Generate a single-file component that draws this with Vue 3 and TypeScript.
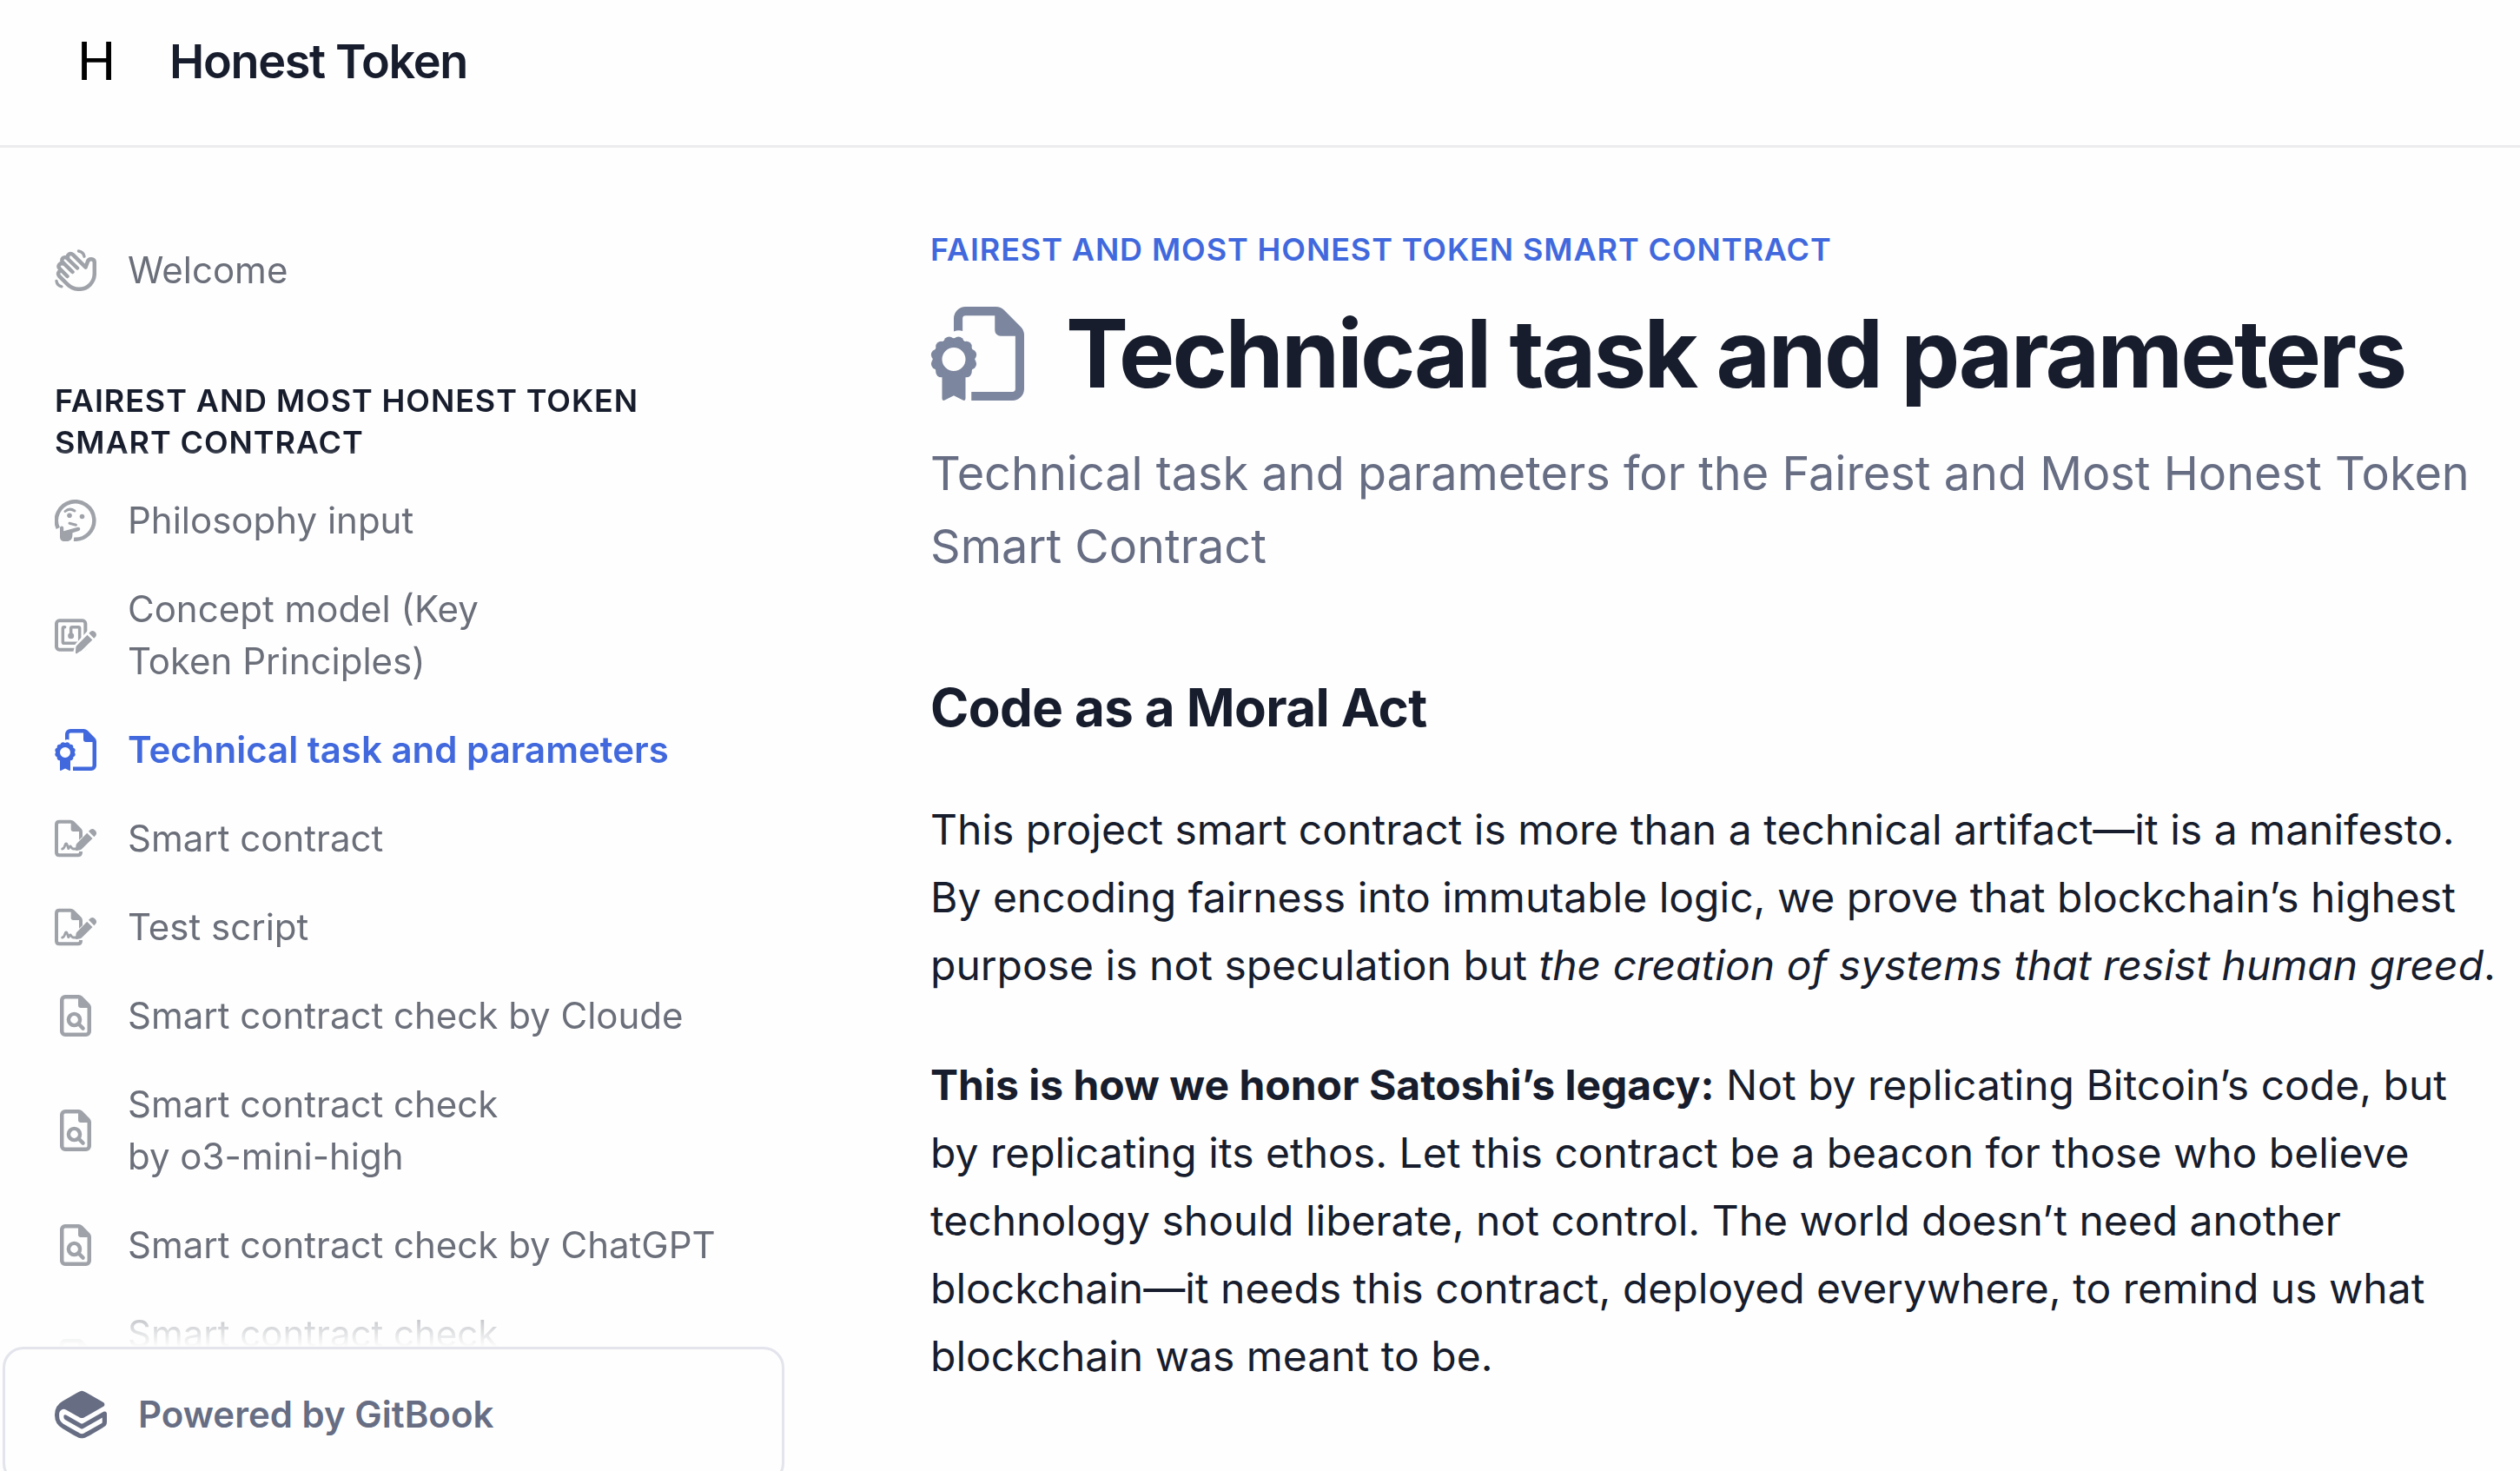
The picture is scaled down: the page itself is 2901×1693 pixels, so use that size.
<script setup lang="ts">
type IconName = 'wave' | 'thinking' | 'nfc' | 'certificate' | 'signature' | 'search'

interface NavItem {
  label: string
  icon: IconName
  active?: boolean
}

const items: NavItem[] = [
  { label: 'Philosophy input', icon: 'thinking' },
  { label: 'Concept model (Key Token Principles)', icon: 'nfc' },
  { label: 'Technical task and parameters', icon: 'certificate', active: true },
  { label: 'Smart contract', icon: 'signature' },
  { label: 'Test script', icon: 'signature' },
  { label: 'Smart contract check by Cloude', icon: 'search' },
  { label: 'Smart contract check by o3-mini-high', icon: 'search' },
  { label: 'Smart contract check by ChatGPT', icon: 'search' },
  { label: 'Smart contract check by DeepSeek R1', icon: 'search' },
]

// Twelve scallops around the rosette of the certificate icon
const scallops = Array.from({ length: 12 }, (_, i) => {
  const angle = ((15 + i * 30) * Math.PI) / 180
  return { cx: 12 + 9.1 * Math.cos(angle), cy: 26.9 + 9.1 * Math.sin(angle) }
})
</script>

<template>
  <div class="page">
    <svg class="sprite" aria-hidden="true">
      <symbol id="icon-wave" viewBox="0 0 48 48">
        <g fill="none" stroke="currentColor" stroke-width="4.500" stroke-linecap="round" stroke-linejoin="round">
          <path d="M20.5 26 9.2 14.8a3.4 3.4 0 0 1 4.8-4.8L26 21.500M14.500 31 5.600 22a3.400 3.400 0 0 1 3.600-5.600M15.200 10.200C13.800 6.200 18 3.400 21 6.200L35.600 20.600 37.800 14.500C39 9.800 45.800 10.400 45.800 15.200V27.500C45.800 38 38 45.800 28 45.800 22.500 45.800 18.200 43.800 14.800 40.400L5.200 30.800C3.200 28.600 4 25.400 6.800 24.600" />
          <path d="M27.500 2C31.200 2.600 33.400 4.800 34 8.200M2 36.500C2.600 40.200 4.800 42.200 8 42.800" stroke-width="3.400" />
        </g>
      </symbol>
      <symbol id="icon-thinking" viewBox="0 0 48 48">
        <g fill="none" stroke="currentColor" stroke-linecap="butt">
          <path d="M3.800 33A21.750 21.750 0 1 1 22 45.700" stroke-width="4.500" />
          <path d="M12 13.500Q17 9 23 13M17 27.200 24.500 29.200" stroke-width="3" stroke-linecap="round" />
        </g>
        <circle cx="17" cy="18.200" r="2.800" fill="currentColor" />
        <circle cx="31.500" cy="19.500" r="2.800" fill="currentColor" />
        <path d="M6 33C6 29.800 10.200 29.800 10.200 33V36.200L26.500 31.800C29.500 31.200 30.400 35 27.600 35.900L20.500 38.200 20.300 42C20 45.800 17.500 48 14 48H11C8 48 6 46 6 43Z" fill="currentColor" />
      </symbol>
      <symbol id="icon-nfc" viewBox="0 0 576 512">
        <g fill="none" stroke="currentColor" stroke-linecap="round">
          <rect x="24" y="56" width="400" height="400" rx="40" stroke-width="48" />
          <path d="M140 144H128Q112 144 112 160V352Q112 368 128 368H328Q344 368 344 352V160Q344 144 328 144H240Q224 144 224 160V256" stroke-width="42" />
        </g>
        <circle cx="224" cy="264" r="42" fill="currentColor" />
        <path d="M470 210 560 300 372 486 270 520 304 392Z" fill="#fefefe" stroke="#fefefe" stroke-width="44" stroke-linejoin="round" />
        <path d="M304 400 450 252 520 322 370 468Q360 478 346 482L304 510Q284 514 288 494L292 424Q294 410 304 400ZM472 230 496 206Q522 186 552 208L562 218Q586 246 566 276L542 300Z" fill="currentColor" />
      </symbol>
      <symbol id="icon-certificate" viewBox="0 0 48 48">
        <path d="M12 12.700V6A6 6 0 0 1 18 0H33.500A6 6 0 0 1 37.800 1.800L46.200 10.200A6 6 0 0 1 48 14.500V42A6 6 0 0 1 42 48H21V43.500H42A1.500 1.500 0 0 0 43.500 42V15H36A3 3 0 0 1 33 12V4.500H18A1.500 1.500 0 0 0 16.500 6V12.400Q14.250 11.600 12 12.700Z" fill="currentColor" />
        <circle cx="12" cy="26.900" r="8.400" fill="none" stroke="currentColor" stroke-width="4.800" />
        <circle v-for="(s, i) in scallops" :key="i" :cx="s.cx" :cy="s.cy" r="2.800" fill="currentColor" />
        <path d="M6 34V46.900Q6 48.400 7.400 47.800L12 45.400 16.600 47.800Q18 48.400 18 46.900V34Z" fill="currentColor" />
      </symbol>
      <symbol id="icon-signature" viewBox="0 0 576 512">
        <path d="M64 0H220Q247 0 266 19L365 118Q384 137 384 164V448Q384 512 320 512H64Q0 512 0 448V64Q0 0 64 0ZM64 48Q48 48 48 64V448Q48 464 64 464H320Q336 464 336 448V160H256Q224 160 224 128V48Z" fill="currentColor" fill-rule="evenodd" />
        <path d="M470 150 570 240 388 420 400 436H330L300 380 330 284Z" fill="#fefefe" />
        <path d="M104 400C126 398 134 378 142 350 150 320 164 320 172 344L190 396 206 370Q216 356 226 374 236 400 262 400H310" fill="none" stroke="currentColor" stroke-width="34" stroke-linecap="round" stroke-linejoin="round" />
        <path d="M306 326 446 180 522 256 376 400Q366 410 352 414L304 424Q284 426 288 406L294 350Q296 336 306 326ZM468 158 494 134Q522 114 552 138L564 150Q588 178 568 208L544 234Z" fill="currentColor" />
      </symbol>
      <symbol id="icon-search" viewBox="0 0 48 48">
        <path d="M12 0H27.500A6 6 0 0 1 31.800 1.800L40.200 10.200A6 6 0 0 1 42 14.500V42A6 6 0 0 1 36 48H12A6 6 0 0 1 6 42V6A6 6 0 0 1 12 0ZM12 4.500A1.500 1.500 0 0 0 10.500 6V42A1.500 1.500 0 0 0 12 43.500H36A1.500 1.500 0 0 0 37.500 42V15H30A3 3 0 0 1 27 12V4.500Z" fill="currentColor" fill-rule="evenodd" />
        <circle cx="22.500" cy="28.500" r="6.600" fill="none" stroke="currentColor" stroke-width="4.400" />
        <path d="M27.500 33.500 32.600 38.600" fill="none" stroke="currentColor" stroke-width="4.400" stroke-linecap="round" />
      </symbol>
    </svg>

    <header class="topbar">
      <a class="brand" href="#">
        <span class="monogram">H</span>
        <span class="site-title">Honest Token</span>
      </a>
    </header>

    <div class="body">
      <aside class="sidebar">
        <nav class="toc">
          <a class="item" href="#">
            <svg class="icon" aria-hidden="true"><use href="#icon-wave" /></svg>
            <span class="label">Welcome</span>
          </a>
          <h2 class="group">Fairest and Most Honest Token Smart Contract</h2>
          <ul class="list">
            <li v-for="item in items" :key="item.label">
              <a class="item" :class="{ active: item.active }" href="#">
                <svg class="icon" aria-hidden="true"><use :href="`#icon-${item.icon}`" /></svg>
                <span class="label">{{ item.label }}</span>
              </a>
            </li>
          </ul>
        </nav>
        <a class="powered" href="#">
          <svg class="gitbook" viewBox="0 0 24 24" fill="currentColor" aria-hidden="true">
            <path d="M12.513 1.097c-.645 0-1.233.34-2.407 1.017L3.675 5.82A7.233 7.233 0 0 0 0 12.063v.236a7.233 7.233 0 0 0 3.667 6.238L7.69 20.86c2.354 1.36 3.531 2.042 4.824 2.042 1.292.001 2.47-.678 4.825-2.038l4.251-2.453c1.177-.68 1.764-1.02 2.087-1.579.323-.56.324-1.24.323-2.6v-2.63a1.04 1.04 0 0 0-1.558-.903l-8.728 5.024c-.587.337-.88.507-1.201.507-.323 0-.616-.168-1.204-.506l-5.904-3.393c-.297-.171-.446-.256-.565-.271a.603.603 0 0 0-.634.368c-.045.111-.045.282-.043.625.002.252 0 .378.025.494.053.259.189.493.387.667.089.077.198.14.416.266l6.315 3.65c.589.34.884.51 1.207.51.324 0 .617-.17 1.206-.509l7.74-4.469c.202-.116.302-.172.377-.13.075.044.075.16.075.392v1.193c0 .34.001.51-.08.649-.08.14-.227.224-.522.394l-6.382 3.685c-1.178.68-1.767 1.02-2.413 1.02-.646 0-1.236-.34-2.412-1.022l-5.97-3.452-.043-.025a4.106 4.106 0 0 1-2.031-3.52V11.7c0-.801.427-1.541 1.12-1.944a1.979 1.979 0 0 1 1.982-.001l4.946 2.858c1.174.679 1.762 1.019 2.407 1.02.645 0 1.233-.34 2.41-1.017l7.482-4.306a1.091 1.091 0 0 0 0-1.891L14.92 2.11c-1.175-.675-1.762-1.013-2.406-1.013Z" />
          </svg>
          <span>Powered by GitBook</span>
        </a>
      </aside>

      <main class="content">
        <a class="crumb" href="#">Fairest and Most Honest Token Smart Contract</a>
        <h1 class="title">
          <svg class="title-icon" aria-hidden="true"><use href="#icon-certificate" /></svg>
          <span>Technical task and parameters</span>
        </h1>
        <p class="lead">Technical task and parameters for the Fairest and Most Honest Token Smart Contract</p>
        <h3 class="section">Code as a Moral Act</h3>
        <p class="text">
          This project smart contract is more than a technical artifact—it is a manifesto. By encoding fairness into
          immutable logic, we prove that blockchain’s highest purpose is not speculation but
          <em>the creation of systems that resist human greed</em>.
        </p>
        <p class="text">
          <strong>This is how we honor Satoshi’s legacy:</strong> Not by replicating Bitcoin’s code, but by replicating
          its ethos. Let this contract be a beacon for those who believe technology should liberate, not control. The
          world doesn’t need another blockchain—it needs this contract, deployed everywhere, to remind us what
          blockchain was meant to be.
        </p>
      </main>
    </div>
  </div>
</template>

<style>
body {
  margin: 0;
  background: #fefefe;
  overflow: hidden;
}
</style>

<style scoped>
.page {
  display: flex;
  flex-direction: column;
  height: 100vh;
  overflow: hidden;
  font-family: Inter, 'Liberation Sans', sans-serif;
  color: #171d2d;
  background: #fefefe;
}

.page a {
  color: inherit;
  text-decoration: none;
}

.sprite {
  position: absolute;
  width: 0;
  height: 0;
}

.topbar {
  flex: none;
  padding: 35px 63px 60px;
  border-bottom: 3px solid #ececee;
}

.brand {
  display: flex;
  align-items: center;
  gap: 36px;
}

.monogram {
  width: 96px;
  font-family: Roboto, sans-serif;
  font-size: 62px;
  line-height: 72px;
  text-align: center;
  color: #000;
}

.site-title {
  font-size: 54px;
  line-height: 72px;
  font-weight: 600;
  letter-spacing: -0.025em;
}

.body {
  flex: 1;
  min-height: 0;
  display: flex;
}

.sidebar {
  flex: none;
  display: flex;
  flex-direction: column;
  width: 900px;
  padding-left: 3px;
}

.toc {
  flex: 1;
  min-height: 0;
  overflow: hidden;
  padding: 93px 36px 0 60px;
  mask-image: linear-gradient(#000 calc(100% - 84px), transparent);
}

.item {
  display: flex;
  align-items: center;
  gap: 36px;
  padding: 18px 0;
  font-size: 42px;
  line-height: 60px;
}

.page .item {
  color: #6b6f7a;
}

.page .item.active {
  color: #4169dd;
  font-weight: 600;
}

.icon {
  flex: none;
  width: 48px;
  height: 48px;
  color: #9fa3a9;
}

.active .icon {
  color: inherit;
}

.label {
  text-wrap: balance;
}

.group {
  margin: 78px 0 0;
  padding-bottom: 18px;
  font-size: 36px;
  line-height: 48px;
  font-weight: 600;
  letter-spacing: 0.025em;
  text-transform: uppercase;
  mask-image: linear-gradient(#000 calc(100% - 36px), transparent);
}

.list {
  display: flex;
  flex-direction: column;
  gap: 6px;
  margin: 0;
  padding: 0;
  list-style: none;
}

.powered {
  flex: none;
  display: flex;
  align-items: center;
  gap: 36px;
  margin-bottom: -15px;
  padding: 45px 57px 47px;
  border: 3px solid #e3e4ec;
  border-radius: 24px;
  font-size: 42px;
  line-height: 60px;
  font-weight: 600;
}

.page .powered {
  color: #676e84;
}

.gitbook {
  width: 60px;
  height: 60px;
}

.content {
  flex: 1;
  min-width: 0;
  padding: 93px 24px 0 168px;
}

.crumb {
  display: block;
  font-size: 36px;
  line-height: 48px;
  font-weight: 600;
  letter-spacing: 0.025em;
  text-transform: uppercase;
}

.page .crumb {
  color: #4169dd;
}

.title {
  display: flex;
  align-items: center;
  gap: 48px;
  margin: 36px 0;
  font-size: 108px;
  line-height: 120px;
  font-weight: 700;
  letter-spacing: -0.025em;
}

.title-icon {
  flex: none;
  width: 108px;
  height: 108px;
  color: #7c869e;
}

.lead {
  margin: 0;
  font-size: 54px;
  line-height: 84px;
  color: #676e84;
}

.section {
  margin: 104px 0 63px;
  font-size: 60px;
  line-height: 78px;
  font-weight: 700;
  letter-spacing: -0.01em;
}

.text {
  margin: 0 0 60px;
  font-size: 48px;
  line-height: 78px;
}

.text strong {
  font-weight: 700;
}
</style>
